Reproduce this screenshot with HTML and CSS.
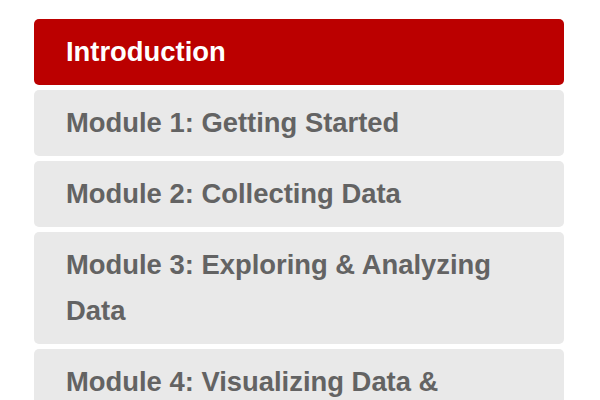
FILE: index.html
```html
<!DOCTYPE html>
<html lang="en">
<head>
<meta charset="utf-8">
<title>Modules</title>
<link rel="stylesheet" href="styles.css">
</head>
<body>
<nav class="menu">
  <a class="item active" href="#">Introduction</a>
  <a class="item" href="#">Module 1: Getting Started</a>
  <a class="item" href="#">Module 2: Collecting Data</a>
  <a class="item" href="#">Module 3: Exploring &amp; Analyzing Data</a>
  <a class="item" href="#">Module 4: Visualizing Data &amp; Communicating Results</a>
</nav>
</body>
</html>
```
FILE: styles.css
```css
html, body {
  margin: 0;
  padding: 0;
  background: #ffffff;
  overflow: hidden;
  height: 400px;
}
body {
  padding: 19px 0 0 34px;
  font-family: "Liberation Sans", Arial, sans-serif;
}
.menu {
  width: 530px;
  display: flex;
  flex-direction: column;
  gap: 5px;
}
.item {
  display: block;
  box-sizing: border-box;
  padding: 10px 60px 10px 32px;
  font-size: 27.4px;
  font-weight: bold;
  line-height: 46px;
  color: #636363;
  background: #e9e9e9;
  border-radius: 5px;
  text-decoration: none;
}
.item.active {
  background: #bb0000;
  color: #ffffff;
}
```
